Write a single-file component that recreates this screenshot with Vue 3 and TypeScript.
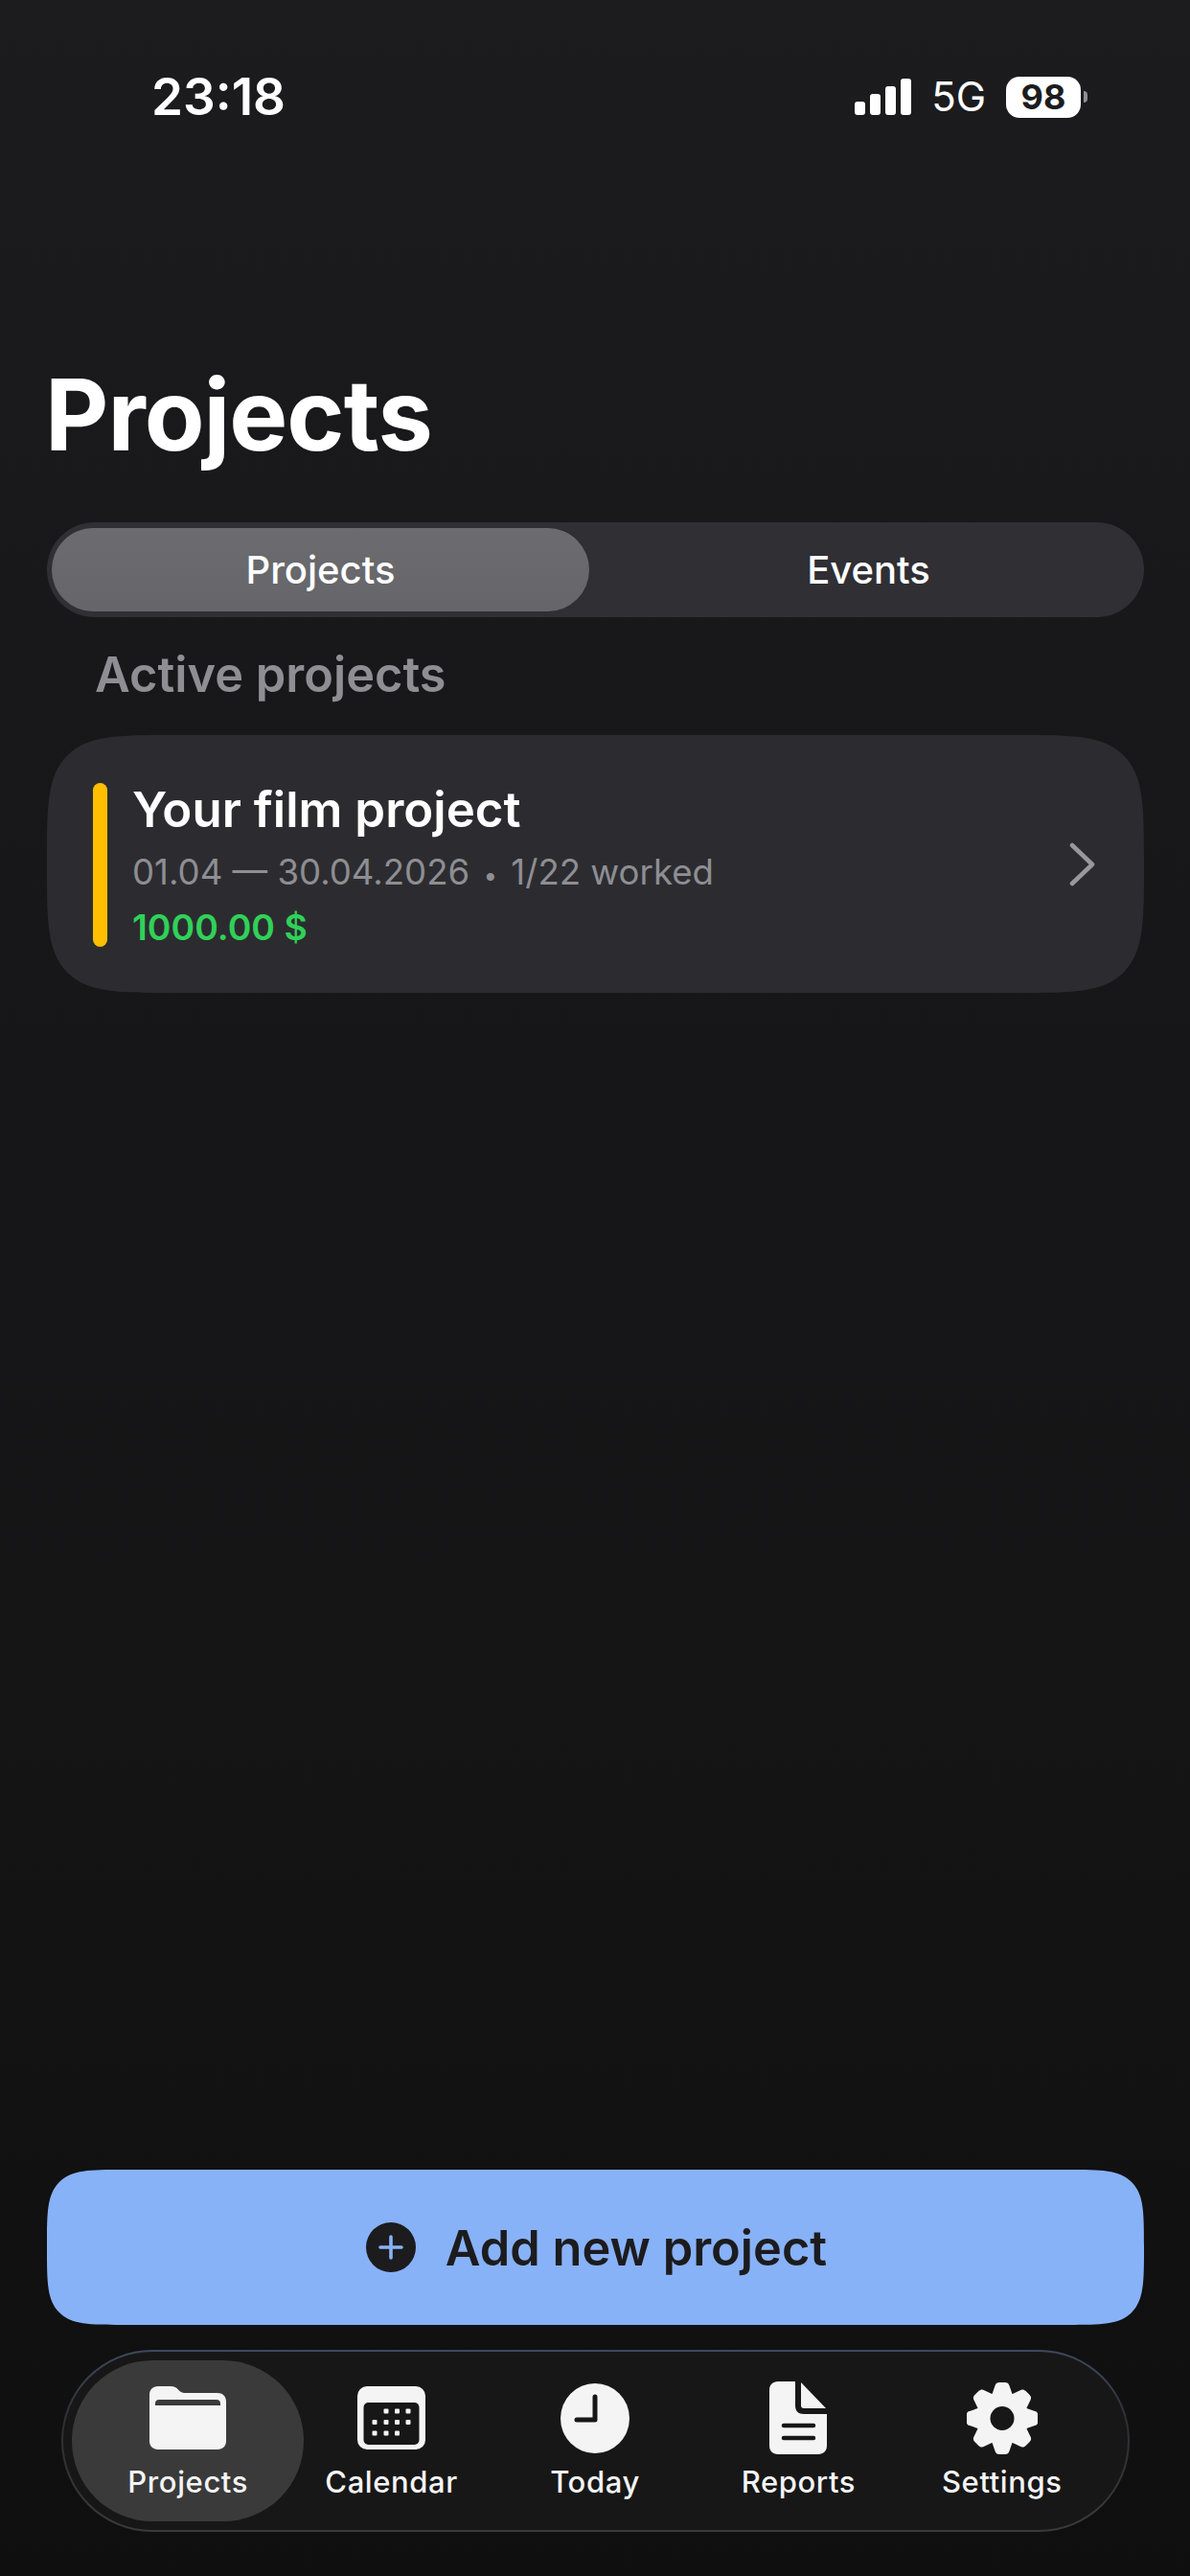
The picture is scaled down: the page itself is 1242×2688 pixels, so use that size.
<script setup lang="ts">
interface NavItem { key: string; label: string; active?: boolean }
const navItems: NavItem[] = [
  { key: 'folder', label: 'Projects', active: true },
  { key: 'calendar', label: 'Calendar' },
  { key: 'clock', label: 'Today' },
  { key: 'doc', label: 'Reports' },
  { key: 'gear', label: 'Settings' },
]
const dots: [number, number][] = [
  [30, 26], [41.5, 26], [53, 26],
  [18, 37.5], [30, 37.5], [41.5, 37.5], [53, 37.5],
  [18, 49], [30, 49], [41.5, 49],
]
const teeth = [0, 45, 90, 135, 180, 225, 270, 315]
const bars = [14, 22, 30, 38]
</script>

<template>
  <div class="page">
    <header class="status">
      <span class="time">23:18</span>
      <div class="status-right">
        <div class="signal">
          <i v-for="h in bars" :key="h" class="sig-bar" :style="{ height: h + 'px' }"></i>
        </div>
        <span class="net">5G</span>
        <div class="battery"><span>98</span></div>
        <i class="nub"></i>
      </div>
    </header>

    <h1 class="title">Projects</h1>

    <div class="segment">
      <div class="seg seg-active">Projects</div>
      <div class="seg seg-rest">Events</div>
    </div>

    <h2 class="section">Active projects</h2>

    <div class="card">
      <i class="accent"></i>
      <div class="card-body">
        <div class="card-title">Your film project</div>
        <div class="card-meta">01.04 — 30.04.2026 <span class="sep">•</span> 1/22 worked</div>
        <div class="card-amount">1000.00 $</div>
      </div>
      <svg class="chevron" width="27" height="46" viewBox="0 0 27 46" fill="none">
        <path d="M3 3 L24 23 L3 43" stroke="#98989d" stroke-width="4.5" stroke-linecap="round" stroke-linejoin="round" />
      </svg>
    </div>

    <div class="spacer"></div>

    <button class="add">
      <svg width="52" height="52" viewBox="0 0 52 52">
        <circle cx="26" cy="26" r="26" fill="#1c1c1e" />
        <path d="M26 15 V37 M15 26 H37" stroke="#88b2f7" stroke-width="3.6" stroke-linecap="round" />
      </svg>
      <span>Add new project</span>
    </button>

    <nav class="nav">
      <div v-for="item in navItems" :key="item.key" class="nav-item" :class="{ 'nav-active': item.active }">
        <div class="nav-icon">
          <svg v-if="item.key === 'folder'" width="80" height="66" viewBox="0 0 80 66">
            <path fill="#f4f4f5" d="M9 0 H22 C26 0 28 1.5 30 3.5 C32 5.5 33.5 7 37 7 H71 C76 7 80 10 80 16 V57 C80 62.5 76.5 66 71 66 H9 C3.5 66 0 62.5 0 57 V9 C0 3.5 3.5 0 9 0 Z" />
            <path fill="#3a3a3a" d="M6 20 V18 C6 15.5 7.5 14 10 14 H70 C72.5 14 74 15.5 74 18 V20 Z" />
          </svg>
          <svg v-else-if="item.key === 'calendar'" width="71" height="66" viewBox="0 0 71 66">
            <rect width="71" height="66" rx="10" fill="#f4f4f5" />
            <rect x="6.5" y="17" width="58" height="44" rx="5" fill="#171717" />
            <rect v-for="d in dots" :key="d.join()" :x="d[0] - 2.5" :y="d[1] - 2.5" width="5" height="5" rx="1" fill="#f4f4f5" />
          </svg>
          <svg v-else-if="item.key === 'clock'" width="72" height="73" viewBox="0 0 72 73">
            <ellipse cx="36" cy="36.5" rx="36" ry="36.5" fill="#f4f4f5" />
            <path d="M36 14 V38 H17" fill="none" stroke="#171717" stroke-width="5" stroke-linecap="round" stroke-linejoin="round" />
          </svg>
          <svg v-else-if="item.key === 'doc'" width="60" height="76" viewBox="0 0 60 76">
            <path fill="#f4f4f5" d="M9 0 H27 V25 C27 31 30 34 36 34 H60 V67 C60 72.5 56.5 76 51 76 H9 C3.5 76 0 72.5 0 67 V9 C0 3.5 3.5 0 9 0 Z" />
            <path fill="#f4f4f5" d="M33 1 L59 28 H36 C34 28 33 27 33 25 Z" />
            <path d="M15 46 H46 M15 59 H46" stroke="#171717" stroke-width="4.5" stroke-linecap="round" />
          </svg>
          <svg v-else width="74" height="75" viewBox="-37 -37.5 74 75">
            <circle r="27.5" fill="#f4f4f5" />
            <path v-for="a in teeth" :key="a" :transform="`rotate(${a})`" fill="#f4f4f5" d="M-11 -24 L-7.5 -34 C-7 -36.5 -5 -37.5 -3 -37.5 H3 C5 -37.5 7 -36.5 7.5 -34 L11 -24 Z" />
            <circle r="12.5" fill="#171717" />
          </svg>
        </div>
        <span class="nav-label">{{ item.label }}</span>
      </div>
    </nav>
  </div>
</template>

<style scoped>
.page {
  box-sizing: border-box;
  height: 2688px;
  width: 1242px;
  display: flex;
  flex-direction: column;
  padding: 0 48px 46px 49px;
  background: linear-gradient(180deg, #1c1c1f 0%, #18181a 25%, #141415 70%, #0f0f0f 100%);
  font-family: Inter, "Liberation Sans", sans-serif;
  color: #fff;
  overflow: hidden;
}
.status {
  height: 202px;
  padding: 72px 59px 0 109px;
  box-sizing: border-box;
  display: flex;
  justify-content: space-between;
  align-items: flex-start;
}
.time {
  font-size: 53px;
  font-weight: 600;
  line-height: 58px;
}
.status-right {
  display: flex;
  align-items: center;
  height: 58px;
}
.signal {
  display: flex;
  align-items: flex-end;
  gap: 5px;
  width: 60px;
  height: 38px;
}
.sig-bar {
  display: block;
  width: 11px;
  border-radius: 3px;
  background: #fff;
}
.net {
  margin-left: 20px;
  font-size: 42px;
  font-weight: 400;
  line-height: 58px;
}
.battery {
  margin-left: 21px;
  width: 78px;
  height: 43px;
  border-radius: 14px;
  background: #fff;
  color: #1c1c1e;
  display: flex;
  align-items: center;
  justify-content: center;
  font-size: 36px;
  font-weight: 700;
}
.nub {
  display: block;
  margin-left: 3px;
  width: 4px;
  height: 12px;
  border-radius: 0 6px 6px 0;
  background: #8e8e93;
}
.title {
  margin: 173px 0 0 -2px;
  font-size: 102.5px;
  font-weight: 700;
  line-height: 116px;
  letter-spacing: -1px;
}
.segment {
  margin-top: 54px;
  height: 99px;
  box-sizing: border-box;
  padding: 6px 5px;
  border-radius: 50px;
  background: #2f2f34;
  display: flex;
}
.seg {
  flex: 1;
  border-radius: 44px;
  display: flex;
  align-items: center;
  justify-content: center;
  font-size: 40px;
  font-weight: 500;
}
.seg-rest {
  padding-left: 9px;
}
.seg-active {
  flex: 0 0 561px;
  background: linear-gradient(180deg, #6b6b70, #65656a);
}
.section {
  margin: 31px 0 0 50px;
  font-size: 50.5px;
  font-weight: 600;
  line-height: 58px;
  color: #8e8e93;
}
.card {
  margin-top: 34px;
  height: 269px;
  box-sizing: border-box;
  padding: 50px 51px 48px 48px;
  border-radius: 134px;
  corner-shape: squircle;
  background: #2c2c30;
  display: flex;
  align-items: center;
}
.accent {
  display: block;
  width: 15px;
  height: 171px;
  border-radius: 8px;
  background: #ffbf00;
}
.card-body {
  flex: 1;
  margin-left: 26px;
  padding-top: 3px;
}
.card-title {
  font-size: 51px;
  font-weight: 600;
  line-height: 56px;
}
.card-meta {
  margin-top: 13px;
  font-size: 36.6px;
  line-height: 48px;
  color: #8e8e93;
}
.sep {
  font-size: 26px;
  margin: 0 4px;
}
.card-amount {
  margin-top: 6px;
  font-size: 37.4px;
  font-weight: 600;
  line-height: 48px;
  color: #30d158;
}
.chevron {
  display: block;
  margin-top: -2px;
}
.spacer {
  flex: 1;
}
.add {
  height: 162px;
  border: 0;
  border-radius: 84px;
  corner-shape: squircle;
  background: #88b2f7;
  color: #1c1c1e;
  display: flex;
  align-items: center;
  justify-content: center;
  gap: 31px;
  font: inherit;
  font-size: 50.5px;
  font-weight: 560;
  padding: 0 0 0 2px;
}
.add svg {
  display: block;
}
.nav {
  margin: 26px 15px 0 15px;
  height: 190px;
  box-sizing: border-box;
  border: 2px solid transparent;
  border-radius: 95px;
  background:
    linear-gradient(#171717, #171717) padding-box,
    linear-gradient(180deg, #3d4a5e 0%, #2c2f33 40%, #3a3a3a 100%) border-box;
  padding: 9px 25px 9px 24px;
  display: grid;
  grid-template-columns: repeat(5, 1fr);
}
.nav-item {
  min-width: 0;
  display: flex;
  flex-direction: column;
  align-items: center;
  border-radius: 84px;
  height: 168px;
}
.nav-active {
  margin: 0 -15px;
  background: #3a3a3a;
}
.nav-icon {
  height: 108px;
  display: flex;
  align-items: center;
  justify-content: center;
  padding-top: 12px;
  box-sizing: border-box;
}
.nav-icon svg {
  display: block;
}
.nav-label {
  font-size: 31px;
  font-weight: 500;
  line-height: 38px;
  letter-spacing: 0.6px;
  color: #f4f4f5;
}
</style>

<style>
body { background: #141415; }
</style>
